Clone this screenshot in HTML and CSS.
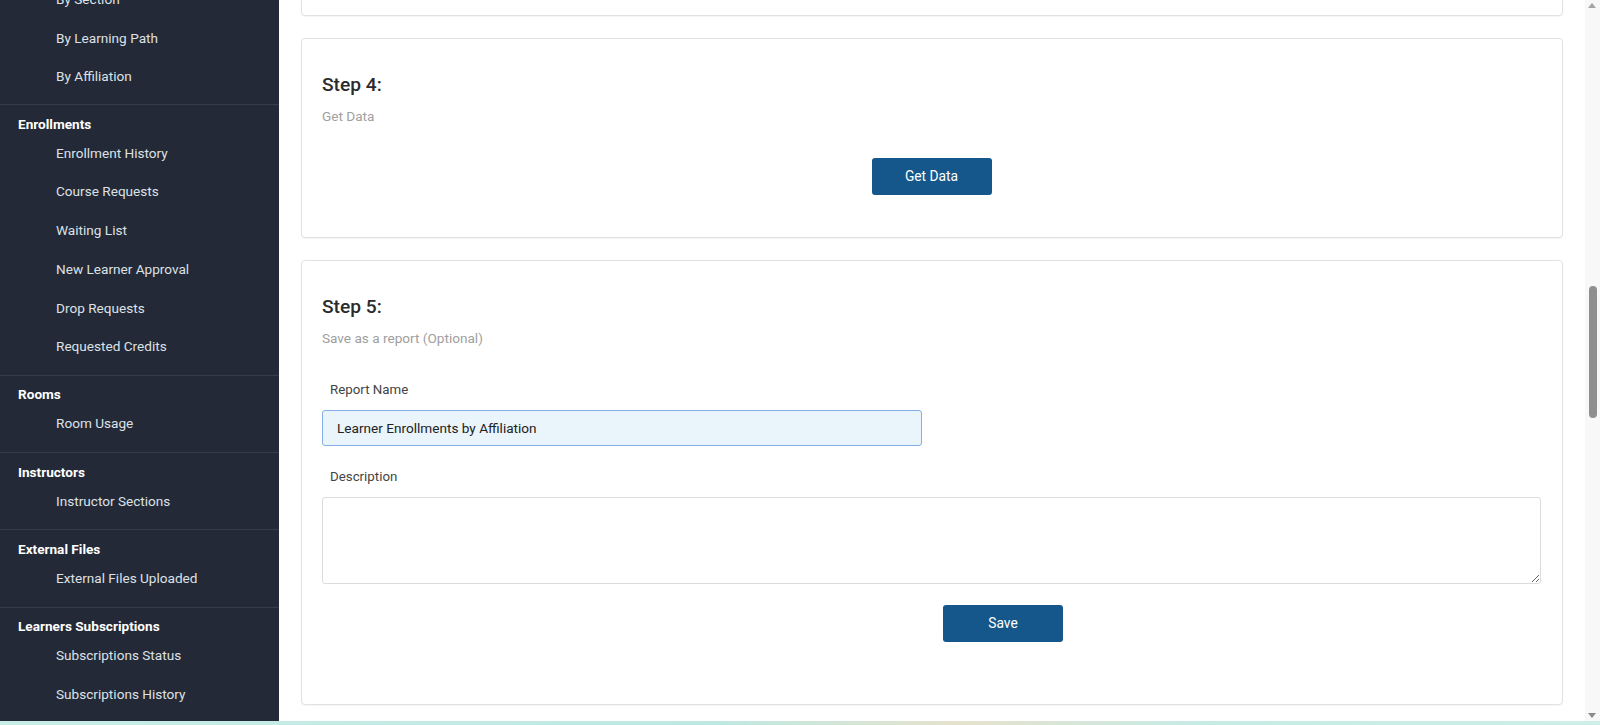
FILE: index.html
```html
<!DOCTYPE html>
<html lang="en">
<head>
  <meta charset="UTF-8">
  <meta name="viewport" content="width=device-width, initial-scale=1.0">
  <title>Report Builder</title>
  <link rel="stylesheet" href="styles.css">
</head>
<body>
  <div class="app">
    <aside class="sidebar">
      <div class="nav-group nav-first">
        <a class="nav-item">By Section</a>
        <a class="nav-item">By Learning Path</a>
        <a class="nav-item">By Affiliation</a>
      </div>
      <div class="nav-group">
        <div class="nav-heading">Enrollments</div>
        <a class="nav-item">Enrollment History</a>
        <a class="nav-item">Course Requests</a>
        <a class="nav-item">Waiting List</a>
        <a class="nav-item">New Learner Approval</a>
        <a class="nav-item">Drop Requests</a>
        <a class="nav-item">Requested Credits</a>
      </div>
      <div class="nav-group">
        <div class="nav-heading">Rooms</div>
        <a class="nav-item">Room Usage</a>
      </div>
      <div class="nav-group">
        <div class="nav-heading">Instructors</div>
        <a class="nav-item">Instructor Sections</a>
      </div>
      <div class="nav-group">
        <div class="nav-heading">External Files</div>
        <a class="nav-item">External Files Uploaded</a>
      </div>
      <div class="nav-group">
        <div class="nav-heading">Learners Subscriptions</div>
        <a class="nav-item">Subscriptions Status</a>
        <a class="nav-item">Subscriptions History</a>
      </div>
    </aside>

    <main class="content">
      <div class="step-card step-prev"></div>

      <div class="step-card">
        <h3 class="step-title">Step 4:</h3>
        <p class="step-desc">Get Data</p>
        <div class="step-actions">
          <button class="btn-primary">Get Data</button>
        </div>
      </div>

      <div class="step-card step-save">
        <h3 class="step-title">Step 5:</h3>
        <p class="step-desc">Save as a report (Optional)</p>
        <div class="form-group">
          <label class="form-label">Report Name</label>
          <input class="form-input" type="text" value="Learner Enrollments by Affiliation">
        </div>
        <div class="form-group">
          <label class="form-label">Description</label>
          <textarea class="form-textarea"></textarea>
        </div>
        <div class="save-row">
          <button class="btn-primary">Save</button>
        </div>
      </div>
    </main>

    <div class="scrollbar">
      <span class="arrow-up"></span>
      <span class="thumb"></span>
      <span class="arrow-down"></span>
    </div>
  </div>
  <div class="taskbar-edge"></div>
</body>
</html>
```

FILE: styles.css
```css
html, body {
  margin: 0;
  padding: 0;
  height: 725px;
  overflow: hidden;
}
body {
  font-family: Roboto, "Liberation Sans", Arial, sans-serif;
  background-color: #ffffff;
  color: #333;
}
.app {
  display: flex;
  height: 721px;
}

/* sidebar */
.sidebar {
  width: 279px;
  flex-shrink: 0;
  background-color: #232936;
  overflow: hidden;
}
.nav-group {
  border-top: 1px solid #363d4a;
  padding: 8.7px 0 8.9px 0;
}
.nav-first {
  border-top: none;
  margin-top: -20px;
  padding-top: 0;
  padding-bottom: 8px;
}
.nav-heading {
  font-size: 13.6px;
  font-weight: 700;
  line-height: 20px;
  color: #ffffff;
  padding-left: 18px;
}
.nav-item {
  display: block;
  height: 38.7px;
  line-height: 38.7px;
  font-size: 13.6px;
  color: #dde1e6;
  padding-left: 56px;
  cursor: pointer;
}

/* main */
.content {
  flex: 1;
  padding: 0 22px 0 22px;
  overflow: hidden;
}
.step-card {
  background-color: #fff;
  border: 1px solid #e1e1e1;
  border-radius: 4px;
  box-shadow: 0 1px 1px rgba(0,0,0,0.04);
  padding: 34px 21px 42px 20px;
  margin-top: 22px;
}
.step-prev {
  box-sizing: border-box;
  height: 61px;
  margin-top: -45px;
  padding: 0;
}
.step-title {
  font-size: 19.2px;
  font-weight: 500;
  line-height: 24px;
  color: #2b2b2b;
  margin: 0;
}
.step-desc {
  font-size: 13.6px;
  line-height: 20px;
  color: #a0a0a0;
  margin: 9px 0 0 0;
}
.step-actions {
  margin-top: 31.5px;
  text-align: center;
}
.btn-primary {
  width: 120px;
  height: 37px;
  background-color: #15578a;
  color: #fff;
  border: none;
  border-radius: 3px;
  font-family: Roboto, "Liberation Sans", Arial, sans-serif;
  font-size: 13.8px;
  cursor: pointer;
}

/* save form */
.step-save {
  padding-bottom: 62px;
}
.form-group {
  margin-top: 22px;
}
.step-save .form-group:first-of-type {
  margin-top: 33px;
}
.form-label {
  display: block;
  font-size: 13.3px;
  line-height: 18px;
  color: #444;
  padding-left: 8px;
  margin-bottom: 11px;
}
.form-input {
  box-sizing: border-box;
  display: block;
  width: 600px;
  height: 36px;
  padding: 0 14px;
  border: 1px solid #86aee6;
  border-radius: 3px;
  background-color: #eaf4fb;
  font-family: Roboto, "Liberation Sans", Arial, sans-serif;
  font-size: 13.6px;
  color: #222;
  outline: none;
}
.form-textarea {
  box-sizing: border-box;
  display: block;
  width: 100%;
  height: 87px;
  border: 1px solid #dcdcdc;
  border-radius: 3px;
  font-family: Roboto, "Liberation Sans", Arial, sans-serif;
  font-size: 13px;
  margin: 0;
}
.save-row {
  margin-top: 21.4px;
  padding-left: 621px;
}

/* fake browser scrollbar */
.scrollbar {
  width: 15px;
  flex-shrink: 0;
  background-color: #f8f8f8;
  position: relative;
}
.arrow-up {
  position: absolute;
  top: 3px;
  left: 3px;
  border-left: 4.5px solid transparent;
  border-right: 4.5px solid transparent;
  border-bottom: 5px solid #a3a3a3;
}
.arrow-down {
  position: absolute;
  bottom: 3px;
  left: 3px;
  border-left: 4.5px solid transparent;
  border-right: 4.5px solid transparent;
  border-top: 5px solid #8a8a8a;
}
.thumb {
  position: absolute;
  top: 286px;
  left: 3.5px;
  width: 8px;
  height: 132px;
  border-radius: 4px;
  background-color: #8f8f8f;
}
.taskbar-edge {
  height: 4px;
  background: linear-gradient(90deg, #c9ece7 0%, #bfe8e2 45%, #e6e2cc 60%, #c6ebe5 75%, #cdeee9 100%);
}
```
